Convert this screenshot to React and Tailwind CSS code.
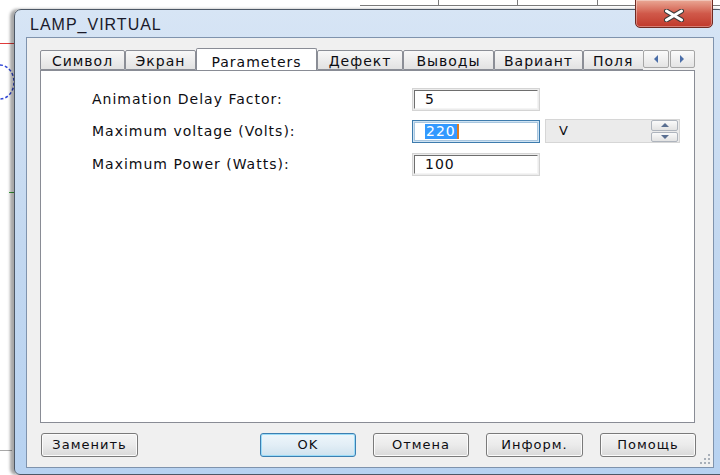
import React from "react";

const FONT = "font-['DejaVu_Sans',Verdana,sans-serif]";
const TEXT = "text-[14px] tracking-[1px] text-[#0d0d12]";

function Tab({ label, w, active }) {
  if (active) {
    return (
      <div
        className={`relative z-10 h-[23px] shrink-0 ${w} flex items-start justify-center pt-[3px] bg-white border border-b-0 border-[#898c95] rounded-t-[2px] ${TEXT}`}
      >
        {label}
      </div>
    );
  }
  return (
    <div
      className={`h-[20px] shrink-0 ${w} flex items-center justify-center whitespace-nowrap border border-[#8b8e96] rounded-t-[2px] bg-gradient-to-b from-[#f8f8f8] to-[#e2e2e2] leading-none pt-[1px] ${TEXT}`}
    >
      {label}
    </div>
  );
}

function Field({ children, focused }) {
  return (
    <div
      className={`h-[23px] w-[128px] p-px border ${
        focused ? "border-[#3d7bad] bg-[#cfe3f3]" : "border-[#d4d4d4] bg-[#ececec]"
      }`}
    >
      <div
        className={`h-full w-full bg-white flex items-center pl-[10px] ${TEXT} ${
          focused
            ? "border border-[#a8c6df]"
            : "border-t border-l border-[#6e6e6e] border-r border-b border-r-[#f4f4f4] border-b-[#f4f4f4]"
        }`}
      >
        {children}
      </div>
    </div>
  );
}

function Btn({ label, w, primary }) {
  return (
    <div
      className={`h-[24px] ${w} rounded-[3px] border flex items-center justify-center text-[13px] tracking-[1px] text-[#0d0d12] ${
        primary
          ? "border-[#3c7fb1] bg-gradient-to-b from-[#eef6fb] via-[#e2eef6] to-[#cfe2ee] shadow-[inset_0_0_0_1px_#9bdcf8]"
          : "border-[#7a7a7a] bg-gradient-to-b from-[#f4f4f4] via-[#ebebeb] to-[#d9d9d9] shadow-[inset_0_0_0_1px_#fbfbfb]"
      }`}
    >
      {label}
    </div>
  );
}

function ScrollArrow({ dir }) {
  return (
    <div className="h-[18px] w-[26px] rounded-[2px] border border-[#a6a6a6] bg-gradient-to-b from-[#fbfbfb] to-[#e4e4e4] flex items-center justify-center">
      <svg width="6" height="8" viewBox="0 0 6 8">
        {dir === "left" ? (
          <path d="M5 0 L1 4 L5 8 Z" fill="#4b6ea8" />
        ) : (
          <path d="M1 0 L5 4 L1 8 Z" fill="#4b6ea8" />
        )}
      </svg>
    </div>
  );
}

export default function App() {
  return (
    <div className={`relative w-[720px] h-[475px] overflow-hidden bg-white ${FONT}`}>
      {/* schematic canvas behind the dialog */}
      <div className="absolute left-[360px] top-[5px] w-[360px] h-px bg-[#7a7a7a]" />
      <div className="absolute left-[438px] top-0 w-px h-[5px] bg-[#7a7a7a]" />
      <div className="absolute left-[517px] top-0 w-px h-[5px] bg-[#7a7a7a]" />
      <div className="absolute left-[597px] top-0 w-px h-[5px] bg-[#7a7a7a]" />
      <div className="absolute left-[679px] top-0 w-px h-[5px] bg-[#7a7a7a]" />
      <div className="absolute left-0 top-[43px] w-[14px] h-px bg-[#e03b3b]" />
      <svg className="absolute left-[-14px] top-[64px]" width="30" height="36" viewBox="0 0 30 36">
        <path d="M14 1 A14 17 0 0 1 14 35" fill="none" stroke="#2f46d6" strokeWidth="1.5" strokeDasharray="3 2" />
      </svg>
      <div className="absolute left-[9px] top-[192px] w-[6px] h-px bg-[#39a43b]" />
      <div className="absolute left-0 top-[450px] w-[12px] h-px bg-[#a8a8a8]" />

      {/* dialog window */}
      <div className="absolute left-[14px] top-[9px] w-[712px] h-[466px] rounded-t-[7px] rounded-b-[6px] border border-[#4d5866] bg-gradient-to-b from-[#d7e5f5] via-[#c3d8f0] to-[#b7d2f1] shadow-[-4px_0_3px_rgba(0,0,0,0.35)] flex flex-col px-[11px] pb-[6px]">
        {/* title bar */}
        <div className="relative h-[27px] shrink-0 flex items-center">
          <span className="pl-[4px] pt-[2px] font-['Liberation_Sans',Arial,sans-serif] text-[16px] tracking-[1px] text-[#1a1a2a]">
            LAMP_VIRTUAL
          </span>
          <div className="absolute left-[609px] top-[-11px] w-[78px] h-[29px] rounded-b-[5px] border border-[#6f2a22] bg-gradient-to-b from-[#e9a896] via-[#d0594a] to-[#c0382a] shadow-[inset_0_0_0_1px_rgba(255,255,255,0.35)] flex items-end justify-center pb-[5px]">
            <svg width="22" height="13" viewBox="0 0 22 13">
              <path d="M3.5 2 L18.5 11 M18.5 2 L3.5 11" stroke="#3a3a3a" strokeWidth="5" strokeLinecap="round" />
              <path d="M3.5 2 L18.5 11 M18.5 2 L3.5 11" stroke="#ffffff" strokeWidth="3" strokeLinecap="round" />
            </svg>
          </div>
        </div>

        {/* client area */}
        <div className="relative h-[431px] shrink-0 border border-[#7f93ad] bg-[#f0f0f0] flex flex-col">
          <div className="pl-[13px] pt-[10px] flex flex-col w-[668px]">
            {/* tab strip */}
            <div className="flex h-[23px]">
              <div className="flex items-end flex-1 overflow-hidden border-b border-[#898c95] relative">
                <Tab label="Символ" w="w-[85px]" />
                <Tab label="Экран" w="w-[71px]" />
                <div className="-mb-px">
                  <Tab label="Parameters" w="w-[121px]" active />
                </div>
                <Tab label="Дефект" w="w-[86px]" />
                <Tab label="Выводы" w="w-[91px]" />
                <Tab label="Вариант" w="w-[89px]" />
                <div className={`h-[20px] w-[80px] shrink-0 flex items-center justify-start pl-[9px] whitespace-nowrap border border-[#8b8e96] rounded-t-[2px] bg-gradient-to-b from-[#f8f8f8] to-[#e2e2e2] leading-none pt-[1px] ${TEXT}`}>
                  Поля
                </div>
              </div>
              <div className="w-[52px] shrink-0 flex items-start gap-[1px] pt-[2px] border-b border-[#898c95]">
                <ScrollArrow dir="left" />
                <ScrollArrow dir="right" />
              </div>
            </div>

            {/* tab page */}
            <div className="h-[352px] w-[655px] border border-t-0 border-[#898c95] bg-white pl-[51px] pt-[17px] flex flex-col">
              <div className="flex items-center h-[23px]">
                <span className={`w-[320px] ${TEXT}`}>Animation Delay Factor:</span>
                <Field>5</Field>
              </div>
              <div className="flex items-center h-[24px] mt-[8px]">
                <span className={`w-[320px] ${TEXT}`}>Maximum voltage (Volts):</span>
                <Field focused>
                  <span className="bg-[#3399ff] text-white leading-[15px] px-px">220</span>
                  <span className="w-[2px] h-[15px] bg-[#e07a1e]" />
                </Field>
                <div className="ml-[5px] h-[24px] w-[135px] border border-[#d6d6d6] bg-[#ebebeb] flex items-center">
                  <span className="pl-[13px] flex-1 text-[13px] text-[#0d0d12]">V</span>
                  <div className="w-[27px] h-[22px] mr-px flex flex-col gap-px">
                    <div className="flex-1 rounded-[2px] border border-[#aeb4bd] bg-gradient-to-b from-[#fafafa] to-[#e3e3e3] flex items-center justify-center">
                      <svg width="8" height="4" viewBox="0 0 8 4"><path d="M0 4 L4 0 L8 4 Z" fill="#5a6f91" /></svg>
                    </div>
                    <div className="flex-1 rounded-[2px] border border-[#aeb4bd] bg-gradient-to-b from-[#fafafa] to-[#e3e3e3] flex items-center justify-center">
                      <svg width="8" height="4" viewBox="0 0 8 4"><path d="M0 0 L4 4 L8 0 Z" fill="#5a6f91" /></svg>
                    </div>
                  </div>
                </div>
              </div>
              <div className="flex items-center h-[23px] mt-[10px]">
                <span className={`w-[320px] ${TEXT}`}>Maximum Power (Watts):</span>
                <Field>100</Field>
              </div>
            </div>
          </div>

          {/* buttons */}
          <div className="mt-[10px] pl-[14px] pr-[17px] flex items-center justify-between">
            <Btn label="Заменить" w="w-[97px]" />
            <div className="flex gap-[17px]">
              <Btn label="OK" w="w-[96px]" primary />
              <Btn label="Отмена" w="w-[96px]" />
              <Btn label="Информ." w="w-[97px]" />
              <Btn label="Помощь" w="w-[96px]" />
            </div>
          </div>

          {/* size grip */}
          <svg className="absolute right-[1px] bottom-[1px]" width="14" height="14" viewBox="0 0 14 14">
            {[
              [10, 2],
              [6, 6], [10, 6],
              [2, 10], [6, 10], [10, 10],
            ].map(([x, y]) => (
              <rect key={`${x}-${y}`} x={x} y={y} width="2" height="2" fill="#a9b0b9" />
            ))}
          </svg>
        </div>
      </div>
    </div>
  );
}
